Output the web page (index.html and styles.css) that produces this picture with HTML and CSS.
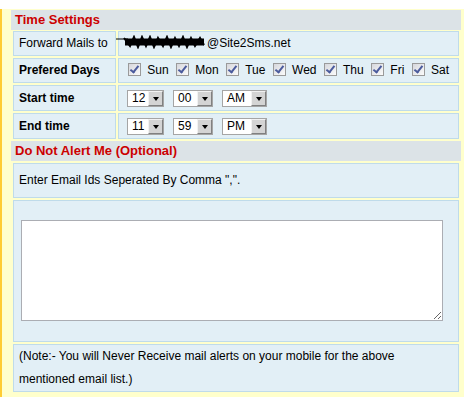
FILE: index.html
```html
<!DOCTYPE html>
<html lang="en">
<head>
    <meta charset="UTF-8">
    <title>Time Settings</title>
    <link rel="stylesheet" href="styles.css">
</head>
<body>

<div class="panel">
    <div class="section-title">Time Settings</div>
    <table class="form form-top">
        <tr>
            <td class="label plain">Forward Mails to</td>
            <td class="value">
                <!-- redacted user id -->
                <svg class="scribble" width="91" height="14" viewBox="0 0 91 14">
                    <path d="M0 4 H12" stroke="#000" stroke-width="1" fill="none"/>
                    <path d="M9 7 H88" stroke="#000" stroke-width="7" fill="none"/>
                    <path d="M8 3 L14 11 L18 2 L22 12 L26 2 L30 11 L34 2 L38 12 L42 3 L47 11 L51 2 L55 12 L59 3 L63 11 L67 2 L71 12 L75 3 L79 11 L84 3 L88 10" stroke="#000" stroke-width="2" fill="none"/>
                </svg>@Site2Sms.net
            </td>
        </tr>
        <tr>
            <td class="label">Prefered Days</td>
            <td class="value days">
                <span class="cb"></span> Sun <span class="cb"></span> Mon <span class="cb"></span> Tue <span class="cb"></span> Wed <span class="cb"></span> Thu <span class="cb"></span> Fri <span class="cb"></span> Sat
            </td>
        </tr>
        <tr class="time-row">
            <td class="label">Start time</td>
            <td class="value">
                <div class="selects">
                    <span class="dd dd-hour"><span class="val">12</span><span class="btn"></span></span>
                    <span class="dd dd-min"><span class="val">00</span><span class="btn"></span></span>
                    <span class="dd dd-ampm"><span class="val">AM</span><span class="btn"></span></span>
                </div>
            </td>
        </tr>
        <tr class="time-row">
            <td class="label">End time</td>
            <td class="value">
                <div class="selects">
                    <span class="dd dd-hour"><span class="val">11</span><span class="btn"></span></span>
                    <span class="dd dd-min"><span class="val">59</span><span class="btn"></span></span>
                    <span class="dd dd-ampm"><span class="val">PM</span><span class="btn"></span></span>
                </div>
            </td>
        </tr>
    </table>

    <div class="section-title">Do Not Alert Me (Optional)</div>
    <table class="form">
        <tr>
            <td class="text-cell">Enter Email Ids Seperated By Comma ",".</td>
        </tr>
        <tr>
            <td class="area-cell"><textarea class="emails"></textarea></td>
        </tr>
        <tr>
            <td class="note">(Note:- You will Never Receive mail alerts on your mobile for the above mentioned email list.)</td>
        </tr>
    </table>
</div>

</body>
</html>
```

FILE: styles.css
```css
body {
    margin: 0;
    font-family: "Liberation Sans", Arial, sans-serif;
    font-size: 12px;
    color: #000;
    background-color: #fff;
}

.panel {
    margin-top: 9px;
    background-color: #ffffcc;
    border-left: 2px solid #ffcc33;
    padding: 1px 3px 6px 9px;
}

.section-title {
    height: 20px;
    line-height: 20px;
    padding-left: 4px;
    background-color: #dce3e7;
    color: #cc0000;
    font-size: 13px;
    font-weight: bold;
}

/* tablas del formulario */
.form {
    width: 100%;
    border-spacing: 2px;
}

.form-top {
    margin-top: -1px;
}

.form td {
    background-color: #e2eff6;
    border: 1px solid #bfdbea;
    padding: 0 5px;
    height: 23px;
    line-height: 15px;
    vertical-align: middle;
    white-space: nowrap;
}

.form .label {
    width: 91px;
    font-weight: bold;
}

.form .label.plain {
    font-weight: normal;
}

.form .time-row td {
    height: 24px;
}

.scribble {
    vertical-align: middle;
    margin-left: -8px;
    margin-top: -3px;
}

/* casillas estilo antiguo */
.cb {
    display: inline-block;
    position: relative;
    width: 13px;
    height: 13px;
    box-sizing: border-box;
    border: 1px solid #9a9a9a;
    background: linear-gradient(135deg, #d6d7dc, #fbfbfb);
    vertical-align: middle;
    margin: -2px 3px 0 4px;
}

.cb::after {
    content: "";
    position: absolute;
    left: 3px;
    top: 0;
    width: 3px;
    height: 7px;
    border: solid #4b5b9d;
    border-width: 0 2px 2px 0;
    transform: rotate(38deg);
}

/* selectores */
.selects {
    display: flex;
    gap: 9px;
    margin-left: 3px;
}

.dd {
    display: flex;
    height: 17px;
    box-sizing: border-box;
    border: 1px solid #a5a5a5;
    background-color: #fff;
}

.dd-hour { width: 37px; }
.dd-min { width: 40px; }
.dd-ampm { width: 45px; }

.dd .val {
    flex: 1;
    padding-left: 4px;
    line-height: 15px;
    font-size: 12px;
}

.dd .btn {
    width: 15px;
    box-sizing: border-box;
    background-color: #d4d4d4;
    border: 1px solid;
    border-color: #f2f2f2 #808080 #808080 #f2f2f2;
    display: flex;
    align-items: center;
    justify-content: center;
}

.dd .btn::after {
    content: "";
    border-left: 3.5px solid transparent;
    border-right: 3.5px solid transparent;
    border-top: 4px solid #000;
    margin-top: 1px;
}

/* parte de abajo */
.form .text-cell {
    line-height: 23px;
    padding: 5px 5px;
    height: auto;
}

.form .area-cell {
    padding: 19px 7px 20px;
    height: auto;
}

.emails {
    display: block;
    width: 422px;
    height: 101px;
    box-sizing: border-box;
    border: 1px solid #abadb3;
    margin: 0;
}

.form .note {
    white-space: normal;
    line-height: 23px;
    padding: 0 5px;
    height: auto;
}
```
